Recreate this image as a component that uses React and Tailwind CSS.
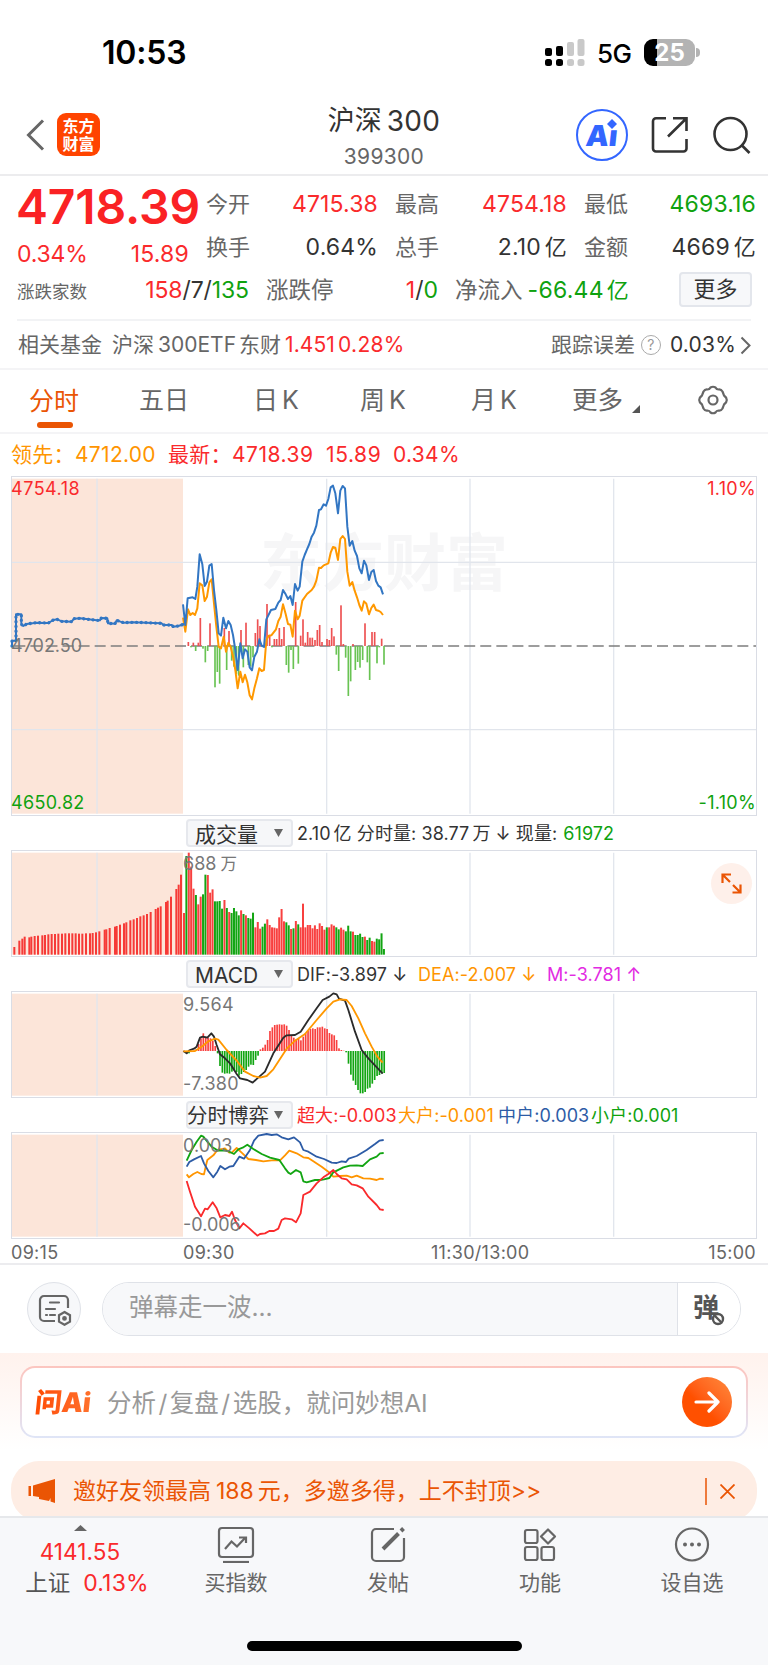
import React from 'react';

const RED = '#f8403f';
const GREEN = '#12a512';

// 主圖座標皆為 3 倍精度
const preMarketLine =
  '36,528 36,512 48,512 48,433 64,433 64,463 70,468 80,462 110,458 145,459 160,450 172,448 185,454 215,455 222,446 240,445 290,451 300,451 304,444 322,445 324,460 345,461 350,451 370,458 400,457 440,458 485,460 490,465 515,465 520,470 535,468 553,462';

const priceLine =
  '549,403 556,465 563,385 578,382 586,387 592,350 599,253 607,283 614,348 621,335 628,287 635,282 642,360 649,420 656,490 663,497 670,443 678,475 685,453 692,465 699,495 706,540 713,600 721,520 728,565 735,538 742,545 749,592 756,601 763,560 771,545 778,508 785,527 792,531 799,448 813,420 826,417 835,398 842,390 849,360 857,373 864,387 871,378 878,405 885,342 893,362 899,350 907,275 914,255 921,238 928,222 935,200 942,188 949,167 957,120 963,118 971,103 978,107 985,87 992,52 999,47 1006,70 1014,130 1021,62 1028,48 1035,55 1042,170 1049,227 1057,213 1064,242 1071,258 1078,295 1085,310 1092,272 1099,286 1107,330 1114,306 1121,300 1128,333 1135,347 1142,352 1149,373';

const leadLine =
  '549,443 556,485 564,418 571,435 578,429 585,435 592,415 599,340 607,346 614,393 621,380 628,337 635,328 642,400 649,470 656,530 663,535 671,500 678,545 685,518 692,530 699,560 706,600 713,655 721,605 728,637 735,614 742,637 749,676 756,688 763,655 771,625 778,595 785,603 792,600 799,510 806,497 814,496 828,478 835,453 842,440 849,403 857,432 864,462 871,464 878,500 885,422 893,448 899,437 907,392 921,372 935,360 942,350 949,332 957,293 963,294 971,286 985,280 992,248 999,231 1006,233 1014,270 1021,207 1028,198 1035,207 1042,305 1049,347 1057,336 1064,362 1071,382 1078,405 1085,422 1092,394 1099,401 1107,433 1114,414 1121,404 1128,420 1135,422 1142,426 1149,435';

const momentum = [
  [565, 516], [573, 532], [580, 518], [587, 543], [595, 518], [601, 444], [609, 536], [616, 577], [623, 543],
  [630, 460], [645, 652], [652, 606], [659, 641], [673, 474], [680, 600], [687, 483], [695, 572], [702, 590],
  [709, 612], [716, 617], [723, 480], [730, 592], [738, 458], [745, 585], [752, 590], [759, 562], [766, 489],
  [773, 448], [780, 468], [801, 402], [809, 495], [816, 532], [823, 507], [830, 507], [838, 474], [845, 507],
  [852, 471], [859, 585], [866, 608], [873, 540], [880, 597], [887, 396], [895, 581], [902, 497], [909, 448],
  [916, 518], [923, 486], [930, 503], [937, 503], [945, 510], [952, 480], [959, 465], [966, 516], [981, 507],
  [988, 510], [995, 474], [1002, 499], [1009, 554], [1016, 603], [1023, 406], [1030, 522], [1037, 563],
  [1045, 678], [1052, 634], [1059, 522], [1066, 600], [1073, 576], [1080, 593], [1088, 570], [1095, 460],
  [1102, 577], [1109, 630], [1116, 486], [1124, 486], [1131, 580], [1138, 532], [1145, 506], [1152, 584],
];

const preVolume = [
  [43, 411], [58, 392], [67, 386], [74, 380], [88, 382], [94, 380], [104, 378], [114, 377], [127, 376], [135, 375],
  [145, 373], [155, 372], [165, 372], [175, 371], [186, 371], [196, 370], [207, 370], [217, 370], [227, 370],
  [237, 371], [247, 371], [258, 370], [270, 370], [278, 369], [288, 367], [298, 364], [314, 359], [319, 358],
  [329, 354], [345, 350], [350, 348], [360, 344], [372, 340], [379, 337], [391, 331], [401, 328], [411, 324],
  [421, 319], [431, 316], [441, 312], [452, 306], [467, 297], [474, 293], [482, 289], [498, 276], [503, 272],
  [513, 260], [529, 237], [536, 224], [543, 194],
];

// 開盤後成交量，r 漲 g 跌
const volume =
  'r219 g48 r38 r80 r146 g165 r193 r170 g163 g104 r105 r158 r148 g184 g184 g183 g206 r180 g204 r216 g219 g204 g214 g226 r211 g222 r226 g234 g236 g218 r262 r246 r266 g260 g251 r238 r255 r262 r263 r265 r232 r207 r244 g247 g256 r267 g265 r243 g253 r262 r191 r262 r255 r255 r265 r256 r267 r250 r258 r269 g262 r262 r253 r257 g262 g268 r263 r269 g274 g257 g274 r275 g285 g285 g281 g291 r290 g300 g293 r303 r305 g296 g298 g280 g327'.split(' ');

const macdBars = [
  245, 250, 244, 242, 238, 222, 205, 190, 200, 203, 205, 212, 228, 250, 288, 308, 311, 310, 311, 305, 302, 306, 317,
  312, 306, 300, 290, 284, 285, 270, 257, 238, 233, 224, 210, 183, 172, 165, 164, 163, 164, 163, 167, 180, 195, 203,
  208, 207, 211, 200, 190, 182, 177, 175, 177, 172, 172, 170, 175, 177, 189, 193, 196, 210, 235, 240, 242, 247, 281,
  314, 332, 345, 360, 370, 370, 366, 356, 353, 341, 330, 318, 315, 310, 309,
];

const difLine =
  '40,243 50,250 58,241 72,236 80,230 90,203 98,200 112,203 124,190 132,200 140,225 150,253 165,265 180,280 200,312 210,325 232,330 248,338 262,325 285,305 310,250 340,203 350,196 375,195 392,185 415,150 440,115 458,90 478,80 490,70 500,73 507,86 525,92 535,120 555,185 575,240 595,265 612,283 638,311';
const deaLine =
  '40,244 75,243 95,230 115,214 135,206 145,209 170,240 200,272 225,305 250,318 270,323 290,318 310,298 350,236 375,212 405,192 440,150 470,115 490,95 510,88 530,90 545,108 565,145 585,190 605,230 622,260 638,278';

const flows = [
  {
    color: '#ff9500',
    points:
      '50,613 57,622 70,612 82,606 94,612 102,613 107,590 112,570 130,556 140,543 150,538 165,535 178,548 186,547 200,534 215,548 235,567 258,570 280,574 305,571 330,571 345,556 358,542 380,550 400,562 415,564 430,574 455,590 475,605 490,620 510,618 530,617 545,622 560,617 580,625 600,626 620,630 630,626 641,627',
  },
  {
    color: '#2d5ca6',
    points:
      '50,590 58,576 72,568 93,558 102,580 115,603 130,622 142,605 151,588 165,598 178,590 190,588 208,560 222,566 240,540 252,512 265,497 290,492 305,495 320,493 335,502 355,508 372,502 390,517 400,540 415,545 440,560 462,567 485,578 500,579 515,574 528,576 536,566 560,558 590,540 615,522 628,512 641,510',
  },
  {
    color: GREEN,
    points:
      '50,572 65,540 80,515 93,497 100,500 112,515 125,530 145,542 165,541 180,546 192,552 205,538 218,533 232,524 250,537 275,552 300,563 328,570 345,595 355,608 362,612 378,600 392,607 400,634 410,637 435,630 450,630 462,628 478,624 490,607 520,592 540,587 560,586 578,588 600,568 620,560 630,550 641,549',
  },
  {
    color: '#fa2a2c',
    points:
      '50,633 60,665 75,710 93,739 105,716 113,718 128,697 140,715 151,742 165,735 178,738 186,725 195,750 208,775 220,760 238,775 262,797 270,792 285,790 298,783 312,783 325,776 335,750 345,745 365,748 378,757 392,730 400,675 420,665 440,640 460,622 475,612 490,600 500,612 515,625 530,628 545,643 560,646 578,655 595,680 620,705 630,718 641,720',
  },
];

// 時間軸直線與盤前底色，origin 為該圖上邊界
const Frame = ({ top, bottom }) => (
  <g>
    <rect x="34" y={top + 8} width="515" height={bottom - top - 15} fill="#fce5d9" />
    <g stroke="#e2e6ed" strokeWidth="4">
      <path d={`M291 ${top + 8}V${bottom - 7}M980 ${top + 8}V${bottom - 7}M1410 ${top + 8}V${bottom - 7}M1841 ${top + 8}V${bottom - 7}`} />
    </g>
    <g stroke="#dadde5" strokeWidth="3" fill="none">
      <path d={`M33 ${top + 1.5}H2271M33 ${bottom - 1.5}H2271M34.5 ${top}V${bottom}M2269.5 ${top}V${bottom}`} />
    </g>
  </g>
);

const Line = ({ points, color, width = 5.5 }) => (
  <polyline points={points} fill="none" stroke={color} strokeWidth={width} strokeLinejoin="round" />
);

const Bar = ({ x, y, base, color, width = 5 }) => (
  <rect x={x - width / 2} y={Math.min(y, base)} width={width} height={Math.abs(y - base)} fill={color} />
);

const StatusBar = () => (
  <div className="flex h-24 items-start justify-between pl-[102px] pr-[68px]">
    <span className="mt-[37px] text-[32px] leading-8 font-semibold tracking-[-0.2px] text-black">10:53</span>
    <div className="mt-[38px] flex items-center">
      <svg className="h-[27px] w-10" viewBox="0 0 40 27">
        <g fill="#000">
          <rect x="0" y="9" width="7" height="8" rx="2" />
          <rect x="11" y="7" width="7" height="10" rx="2" />
          <rect x="0" y="20" width="7" height="7" rx="2.5" />
          <rect x="11" y="20" width="7" height="7" rx="2.5" />
        </g>
        <g fill="#c9c9c9">
          <rect x="22" y="3" width="7" height="14" rx="2" />
          <rect x="32.5" y="0" width="7" height="17" rx="2" />
          <rect x="22" y="20" width="7" height="7" rx="2.5" />
          <rect x="32.5" y="20" width="7" height="7" rx="2.5" />
        </g>
      </svg>
      <span className="mt-[2px] ml-[12px] w-[36px] text-[26px] leading-[27px] font-medium tracking-[-0.5px] text-black">5G</span>
      <div className="ml-[11px] flex h-[27px] w-[51px] items-center justify-center rounded-[9px] bg-linear-to-r from-black from-25% to-[#b3b3b3] to-25% text-[24px] leading-none font-bold text-white">
        25
      </div>
      <div className="ml-[1px] h-[9px] w-[4px] rounded-r-full bg-[#b3b3b3]"></div>
    </div>
  </div>
);

const Header = () => (
  <div className="flex h-20 items-start justify-between border-b-2 border-[#ececee] pr-[17px] pl-[26px]">
    <div className="mt-[17px] flex w-[213px] items-center">
      <svg className="h-[32px] w-[19px]" viewBox="0 0 19 32" fill="none" stroke="#666" strokeWidth="3">
        <path d="M17 1.5L2.5 16L17 30.5" />
      </svg>
      <div className="ml-[12px] flex h-[43px] w-[43px] flex-col items-center justify-center rounded-[9px] bg-[#ff4400] text-[16px] leading-[18px] font-bold text-white">
        <span>东方</span>
        <span>财富</span>
      </div>
    </div>
    <div className="mt-[9px] flex flex-col items-center">
      <div className="flex items-center gap-[5px] text-[27px] leading-8 text-[#333]">
        <span>沪深</span>
        <span className="text-[28px] tracking-[0.3px]">300</span>
      </div>
      <span className="mt-[8px] text-[21px] leading-6 tracking-[0.3px] text-[#666]">399300</span>
    </div>
    <div className="mt-[13px] flex w-[222px] items-center justify-end">
      <div className="relative flex h-[52px] w-[52px] items-center justify-center rounded-full border-[2.5px] border-[#3366ff] text-[29px] leading-none font-black text-[#3366ff]">
        <span className="-skew-x-6">Aı</span>
        <svg className="absolute top-[8px] left-[29px] h-[10px] w-[10px]" viewBox="0 0 10 10" fill="#3366ff">
          <path d="M5 0L10 5L5 10L0 5Z" />
        </svg>
      </div>
      <svg className="ml-[23px] h-[38px] w-[38px]" viewBox="0 0 38 38" fill="none" stroke="#333" strokeWidth="2.6">
        <path d="M15 2.3H5a3 3 0 0 0-3 3V32.500a3 3 0 0 0 3 3H32.500a3 3 0 0 0 3-3V23" />
        <path d="M22 2.300H35.500V15M35.500 2.300L17 20.500" />
      </svg>
      <svg className="ml-[24px] h-[38px] w-[38px]" viewBox="0 0 38 38" fill="none" stroke="#333" strokeWidth="2.6">
        <circle cx="17.500" cy="18" r="16" />
        <path d="M28.500 29L36.500 37" />
      </svg>
    </div>
  </div>
);

const Stat = ({ label, value, unit, color = 'text-[#333]' }) => (
  <div className="flex items-center justify-between">
    <span className="text-[22px] text-[#666]">{label}</span>
    <span className={`flex items-center gap-[4px] text-[23px] tracking-[0.15px] ${color}`}>
      {value}
      {unit && <span className="text-[22px]">{unit}</span>}
    </span>
  </div>
);

const Quote = () => (
  <div className="h-[146px] pr-[12px] pl-[17px] leading-7">
    <div className="grid h-[94px] grid-cols-4 gap-x-[17px] pt-[14px]">
      <div>
        <div className="-ml-px text-[48px] leading-[34px] font-semibold tracking-[-0.15px] whitespace-nowrap text-[#fa2224]">4718.39</div>
        <div className="mt-[16px] flex justify-between text-[23px] text-[#fa2a2c]">
          <span className="tracking-[-0.2px]">0.34%</span>
          <span className="tracking-[0.2px]">15.89</span>
        </div>
      </div>
      <div className="space-y-[15px]">
        <Stat label="今开" value="4715.38" color="text-[#fa2a2c]" />
        <Stat label="换手" value="0.64%" />
      </div>
      <div className="space-y-[15px]">
        <Stat label="最高" value="4754.18" color="text-[#fa2a2c]" />
        <Stat label="总手" value="2.10" unit="亿" />
      </div>
      <div className="space-y-[15px]">
        <Stat label="最低" value="4693.16" color="text-[#0fa20f]" />
        <Stat label="金额" value="4669" unit="亿" />
      </div>
    </div>
    <div className="flex h-[38px] items-center gap-[17px] text-[23px]">
      <div className="flex w-[232px] items-center justify-between pt-[2px]">
        <span className="mt-[4px] text-[17.5px] text-[#666]">涨跌家数</span>
        <span className="tracking-[-0.1px] text-[#333]">
          <span className="text-[#fa2a2c]">158</span>/7/<span className="text-[#0fa20f]">135</span>
        </span>
      </div>
      <div className="flex w-[172px] items-center justify-between pt-[2px]">
        <span className="text-[22.5px] text-[#666]">涨跌停</span>
        <span className="text-[#333]">
          <span className="text-[#fa2a2c]">1</span>/<span className="text-[#0fa20f]">0</span>
        </span>
      </div>
      <div className="flex w-[174px] items-center justify-between pt-[2px] whitespace-nowrap">
        <span className="text-[22.5px] text-[#666]">净流入</span>
        <span className="flex items-center gap-[3px] tracking-[0.25px] text-[#0fa20f]">
          -66.44<span className="text-[22px]">亿</span>
        </span>
      </div>
      <div className="ml-[33px] flex h-[35px] w-[73px] items-center justify-center rounded-[4px] border-2 border-[#e3e6ec] bg-[#f7f8fa] text-[22px] text-[#333]">更多</div>
    </div>
    <div className="mt-[11px] mr-[5px] h-[2px] bg-[#f2f3f5]"></div>
  </div>
);

const FundRow = () => (
  <div className="flex h-[48px] items-center border-b-2 border-[#f4f4f6] pr-[17px] pl-[18px] text-[21px] text-[#666]">
    <span>相关基金</span>
    <span className="ml-[10px]">沪深</span>
    <span className="ml-[4px]">300ETF</span>
    <span className="ml-[3px]">东财</span>
    <span className="ml-[4px] tracking-[0.1px] text-[#fa2a2c]">1.451</span>
    <span className="ml-[3px] tracking-[0.3px] text-[#fa2a2c]">0.28%</span>
    <span className="ml-auto">跟踪误差</span>
    <span className="mx-[6px] flex h-5 w-5 items-center justify-center rounded-full border-[1.5px] border-[#aaa] text-[14px] leading-none text-[#999]">?</span>
    <span className="ml-[3px] tracking-[0.2px] text-[#333]">0.03%</span>
    <svg className="ml-[4px] h-[19px] w-[11px]" viewBox="0 0 11 19" fill="none" stroke="#666" strokeWidth="2">
      <path d="M1.500 1.500L9.500 9.500L1.500 17.500" />
    </svg>
  </div>
);

const Tabs = () => (
  <div className="flex h-[64px] items-center border-b-2 border-[#f4f4f6] pl-[29px] text-[25px] leading-8 text-[#666]">
    <div className="flex w-[110px] flex-col pt-[11px] text-[#ea5504]">
      <span>分时</span>
      <span className="mt-[5px] ml-[8px] h-[6px] w-[36px] rounded-full bg-[#ea5504]"></span>
    </div>
    <span className="-mt-[2px] w-[114px]">五日</span>
    <span className="-mt-[2px] flex w-[107px] gap-[4px]">日<span>K</span></span>
    <span className="-mt-[2px] flex w-[111px] gap-[4px]">周<span>K</span></span>
    <span className="-mt-[2px] flex w-[101px] gap-[4px]">月<span>K</span></span>
    <span className="-mt-[2px] w-[60px] text-[25.500px]">更多</span>
    <svg className="mt-[16px] h-[8px] w-[8px]" viewBox="0 0 8 8" fill="#555">
      <path d="M8 0V8H0Z" />
    </svg>
    <svg className="-mt-[2px] ml-[57px] h-[30px] w-[32px]" viewBox="0 0 32 30" fill="none" stroke="#666" strokeWidth="2.2" strokeLinejoin="round">
      <path d="M10.500 4.500Q12.500 4.500 13.500 2.500Q16 1 18.500 2.500Q19.500 4.500 21.500 4.500Q24 4 25.500 6.500Q26.500 9 27 10.500Q29.800 12.500 29.800 15Q29.800 17.500 27 19.500Q26.500 21 25.500 23.500Q24 26 21.500 25.500Q19.500 25.500 18.500 27.500Q16 29 13.500 27.500Q12.500 25.500 10.500 25.500Q8 26 6.500 23.500Q5.500 21 5 19.500Q2.200 17.500 2.200 15Q2.200 12.500 5 10.500Q5.500 9 6.500 6.500Q8 4 10.500 4.500Z" />
      <circle cx="16" cy="15" r="4.500" />
    </svg>
  </div>
);

const LeadRow = () => (
  <div className="flex h-[42px] items-center pb-[2px] pl-[11px] text-[21px] leading-none tracking-[0.3px] whitespace-nowrap text-[#fa2a2c]">
    <span className="w-[64px] text-[#ff9500]">领先：</span>
    <span className="w-[93px] text-[#ff9500]">4712.00</span>
    <span className="w-[64px]">最新：</span>
    <span className="w-[94px] tracking-[0.500px]">4718.39</span>
    <span className="w-[67px] tracking-[0.600px]">15.89</span>
    <span>0.34%</span>
  </div>
);

const PriceChart = () => (
  <div className="relative h-[340px] text-[18px] leading-5 tracking-[0.300px]">
    <span className="absolute top-[53px] left-[260px] text-[62px] leading-[70px] font-bold tracking-normal text-[#f6f6f7]">东方财富</span>
    <svg className="relative block h-[340px] w-[768px]" viewBox="0 18 2304 1020">
      <Frame top={18} bottom={1038} />
      <path d="M36 277H2268M36 779H2268" stroke="#e1e5ec" strokeWidth="4" />
      <path d="M36 528H2268" stroke="#7d7d7d" strokeWidth="4" strokeDasharray="33 15.200" strokeDashoffset="-7" />
      {momentum.map(([x, y]) => (
        <Bar key={x} x={x} y={y} base={528} color={y < 528 ? '#ee5152' : '#69c353'} />
      ))}
      <Line points={leadLine} color="#ff9800" width={6} />
      <Line points={preMarketLine} color="#3276c3" width={6} />
      <polyline points={preMarketLine} fill="none" stroke="#3276c3" strokeWidth="10" strokeLinecap="round" strokeDasharray="0.1 14" />
      <Line points={priceLine} color="#3276c3" width={6} />
    </svg>
    <span className="absolute top-[3px] left-[11px] tracking-[0.500px] text-[#fa2a2c]">4754.18</span>
    <span className="absolute top-[3px] right-[12px] text-[#fa2a2c]">1.10%</span>
    <span className="absolute top-[160px] left-[11px] tracking-normal text-[#777]">4702.50</span>
    <span className="absolute top-[317px] left-[11px] text-[#0fa20f]">4650.82</span>
    <span className="absolute top-[317px] right-[12px] text-[#0fa20f]">-1.10%</span>
  </div>
);

const IndicatorRow = ({ name, tight, children }) => (
  <div className="flex h-[34px] items-center pl-[186px] text-[18px] leading-none whitespace-nowrap text-[#333]">
    <div className={`flex h-[28px] w-[107px] shrink-0 items-center justify-between rounded-[4px] border-2 border-[#e6e8ed] bg-[#f6f7f9] pr-[8px] text-[21px] ${tight ? '' : 'pl-[7px]'}`}>
      <span className={tight ? '-ml-px pt-[2px] text-[20.500px]' : 'pt-[2px]'}>{name}</span>
      <svg className="h-[8px] w-[9px]" viewBox="0 0 9 8" fill="#666">
        <path d="M0 0H9L4.500 8Z" />
      </svg>
    </div>
    <div className="flex items-center pt-[2px] pl-[4px] tracking-[0.080px]">{children}</div>
  </div>
);

const VolumeChart = () => (
  <div className="relative h-[107px]">
    <svg className="block h-[107px] w-[768px]" viewBox="0 120 2304 321">
      <Frame top={120} bottom={441} />
      {preVolume.map(([x, y]) => (
        <Bar key={x} x={x} y={y} base={434} color="#f63a37" width={6} />
      ))}
      {volume.map((v, i) => (
        <Bar key={i} x={552 + i * 7.14} y={Number(v.slice(1)) + 90} base={434} color={v[0] === 'r' ? RED : GREEN} width={6} />
      ))}
    </svg>
    <span className="absolute top-[4px] left-[183px] flex items-center gap-[4px] text-[18px] leading-5 text-[#777]">
      688<span className="text-[16.500px]">万</span>
    </span>
    <div className="absolute top-[13px] left-[711px] flex h-[41px] w-[41px] items-center justify-center rounded-full bg-[#fef0ea]">
      <svg className="h-[21px] w-[21px]" viewBox="0 0 21 21" fill="none" stroke="#ea5504" strokeWidth="2.2">
        <path d="M1.500 10V1.500H10M1.500 1.500L9 9M19.500 11.500V19.500H11.500M19.500 19.500L12 12" />
      </svg>
    </div>
  </div>
);

const MacdChart = () => (
  <div className="relative h-[107px] text-[18px] leading-5 tracking-[0.300px] text-[#777]">
    <svg className="block h-[107px] w-[768px]" viewBox="0 543 2304 321">
      <Frame top={543} bottom={864} />
      <g transform="translate(510 480)">
        {macdBars.map((y, i) => (
          <Bar key={i} x={50 + i * 7.14} y={y} base={243} color={y < 243 ? RED : GREEN} />
        ))}
        <Line points={difLine} color="#2b2b2b" />
        <Line points={deaLine} color="#ff9800" />
      </g>
    </svg>
    <span className="absolute top-[4px] left-[183px]">9.564</span>
    <span className="absolute top-[83px] left-[183px]">-7.380</span>
  </div>
);

const FlowChart = () => (
  <div className="relative h-[107px] text-[18px] leading-5 text-[#777]">
    <svg className="block h-[107px] w-[768px]" viewBox="0 966 2304 321">
      <Frame top={966} bottom={1287} />
      <g transform="translate(510 480)">
        {flows.map((f) => (
          <Line key={f.color} points={f.points} color={f.color} />
        ))}
      </g>
    </svg>
    <span className="absolute top-[4px] left-[183px]">0.003</span>
    <span className="absolute top-[83px] left-[183px]">-0.006</span>
  </div>
);

const TimeAxis = () => (
  <div className="flex h-[26px] items-center border-b-2 border-[#ececef] pt-[4px] pr-[12px] pl-[11px] text-[18px] leading-none tracking-[0.300px] text-[#666]">
    <span className="w-[172px]">09:15</span>
    <span className="w-[248px]">09:30</span>
    <span>11:30/13:00</span>
    <span className="ml-auto">15:00</span>
  </div>
);

const Danmu = () => (
  <div className="flex h-[88px] items-center pl-[27px]">
    <div className="flex h-[54px] w-[54px] items-center justify-center rounded-full border border-[#dfe2e8] bg-[#f7f8fa]">
      <svg className="mt-px ml-px h-[32px] w-[34px]" viewBox="0 0 34 32" fill="none" stroke="#666" strokeWidth="2.2">
        <path d="M17 27H6a4 4 0 0 1-4-4V6a4 4 0 0 1 4-4H26a4 4 0 0 1 4 4V14" />
        <path d="M12 8.500H21M8 15H17M12 21H17M8 21h1" strokeLinecap="round" />
        <path d="M26.500 18L32 21.200V27.600L26.500 30.800L21 27.600V21.200Z" />
        <circle cx="26.500" cy="24.400" r="1.300" fill="#666" />
      </svg>
    </div>
    <div className="ml-[21px] flex h-[54px] w-[639px] overflow-hidden rounded-full border border-[#dfe2e8]">
      <div className="flex flex-1 items-center bg-[#f7f8fa] pb-[4px] pl-[26px] text-[24.500px] text-[#999]">弹幕走一波...</div>
      <div className="relative w-[63px] border-l border-[#dfe2e8] bg-white">
        <span className="absolute top-[12px] left-[15px] text-[26px] leading-[26px] font-bold text-[#555]">弹</span>
        <svg className="absolute top-[29px] left-[33px] h-[14px] w-[14px]" viewBox="0 0 14 14" stroke="#555" strokeWidth="2.400" fill="#fff">
          <circle cx="7" cy="7" r="5" />
          <path d="M4 4L10 10" />
        </svg>
      </div>
    </div>
  </div>
);

const AskAi = () => (
  <div className="h-[108px] bg-linear-to-b from-[#fff2ed] to-white to-90% px-[20px] pt-[13px]">
    <div className="h-[72px] rounded-[15px] bg-linear-to-b from-[#fcc5bf] to-[#dfe5f7] p-[2px]">
      <div className="flex h-full items-center rounded-[13px] bg-white pr-[14px] pl-[13px]">
        <span className="flex w-[72px] -skew-x-6 items-center bg-linear-to-r from-[#ff4a00] to-[#ff7a33] bg-clip-text text-[27px] leading-none font-black tracking-[-0.200px] whitespace-nowrap text-transparent">
          问Ai
        </span>
        <span className="flex flex-1 gap-[2.500px] pt-[2px] text-[24.500px] whitespace-nowrap text-[#999]">
          <span>分析</span>
          <span>/</span>
          <span>复盘</span>
          <span>/</span>
          <span>选股，就问妙想AI</span>
        </span>
        <div className="flex h-[50px] w-[50px] items-center justify-center rounded-full bg-linear-to-bl from-[#ff8a3c] to-[#ff5000] to-60%">
          <svg className="h-[24px] w-[26px]" viewBox="0 0 26 24" fill="none" stroke="#fff" strokeWidth="3.200" strokeLinecap="round" strokeLinejoin="round">
            <path d="M2 12H24M15 3L24 12L15 21" />
          </svg>
        </div>
      </div>
    </div>
  </div>
);

const Promo = () => (
  <div className="h-[55px] overflow-hidden px-[11px]">
    <div className="flex h-[60px] items-center rounded-[28px] bg-[#feede4] pl-[17px] text-[23px] whitespace-nowrap text-[#ea5504]">
      <svg className="h-[24px] w-[28px]" viewBox="0 0 28 24" fill="#ea5504">
        <path d="M0.500 7H3V17H0.500ZM5 6.500L27 0V24L22.500 22.500V19L21 22L11 20V18L5 17Z" />
      </svg>
      <span className="ml-[17px]">邀好友领最高</span>
      <span className="ml-[5px]">188</span>
      <span className="ml-[4px]">元，多邀多得，上不封顶&gt;&gt;</span>
      <span className="ml-auto h-[27px] w-[2px] bg-[#ee7a3c]"></span>
      <svg className="mr-[22px] ml-[13px] h-[15px] w-[15px]" viewBox="0 0 15 15" fill="none" stroke="#ea5504" strokeWidth="1.800">
        <path d="M0.500 0.500L14.500 14.500M14.500 0.500L0.500 14.500" />
      </svg>
    </div>
  </div>
);

const NavItem = ({ label, children }) => (
  <div className="flex w-[152px] flex-col items-center">
    <svg className="h-[38px] w-[38px]" viewBox="0 0 38 38" fill="none" stroke="#666" strokeWidth="2.200">
      {children}
    </svg>
    <span className="mt-[6px] text-[21px] leading-7 text-[#666]">{label}</span>
  </div>
);

const BottomBar = () => (
  <div className="flex h-[149px] flex-col items-center border-t-2 border-[#e6e8eb] bg-[#f7f8fa]">
    <div className="flex w-full flex-1 pt-[7px]">
      <div className="flex w-[160px] flex-col items-center text-[22.500px] leading-7 text-[#fa2a2c]">
        <svg className="h-[6px] w-[13px]" viewBox="0 0 13 6" fill="#666">
          <path d="M0 6L6.500 0L13 6Z" />
        </svg>
        <span className="mt-[7px] tracking-[0.100px]">4141.55</span>
        <span className="mt-[3px] flex gap-[13px] pl-[14px]">
          <span className="text-[#555]">上证</span>
          <span className="text-[23px] tracking-[0.200px]">0.13%</span>
        </span>
      </div>
      <NavItem label="买指数">
        <rect x="2" y="3" width="34" height="29" rx="3" />
        <path d="M6 37H32" />
        <path d="M8 24L14.500 16.500L20 21.500L28.500 12.500M22 12.500H29V18" />
      </NavItem>
      <NavItem label="发帖">
        <path d="M25 4H7a4 4 0 0 0-4 4V32a4 4 0 0 0 4 4H31a4 4 0 0 0 4-4V13" />
        <path d="M14 24L29.500 8.500M32 6L34.500 3.500" strokeWidth="4" />
      </NavItem>
      <NavItem label="功能">
        <rect x="4" y="5" width="12.500" height="13" rx="2" />
        <rect x="4" y="22" width="12.500" height="13" rx="2" />
        <rect x="20.500" y="22" width="12.500" height="13" rx="2" />
        <path d="M27 4.500L34 11.500L27 18.500L20 11.500Z" strokeLinejoin="round" />
      </NavItem>
      <NavItem label="设自选">
        <circle cx="19" cy="19.500" r="16" />
        <g fill="#666" stroke="none">
          <circle cx="12" cy="19.500" r="2" />
          <circle cx="19" cy="19.500" r="2" />
          <circle cx="26" cy="19.500" r="2" />
        </g>
      </NavItem>
    </div>
    <div className="mb-[14px] h-[10px] w-[275px] rounded-full bg-black"></div>
  </div>
);

const App = () => {
  return (
    <div className="h-[1665px] w-[768px] overflow-hidden bg-white font-['Inter','Noto_Sans_CJK_SC',sans-serif]">
      <StatusBar />
      <Header />
      <Quote />
      <FundRow />
      <Tabs />
      <LeadRow />
      <PriceChart />
      <IndicatorRow name="成交量">
        <span>2.10</span>
        <span className="ml-[3px]">亿 分时量: 38.77</span>
        <span className="ml-[3px]">万 ↓ 现量:</span>
        <span className="ml-[6px] text-[#0fa20f]">61972</span>
      </IndicatorRow>
      <VolumeChart />
      <IndicatorRow name="MACD">
        <span className="w-[121px]">DIF:-3.897 ↓</span>
        <span className="w-[129px] text-[#ff9500]">DEA:-2.007 ↓</span>
        <span className="text-[#e22be2]">M:-3.781 ↑</span>
      </IndicatorRow>
      <MacdChart />
      <IndicatorRow name="分时博弈" tight>
        <span className="w-[101px] text-[#fa2a2c]">超大:-0.003</span>
        <span className="w-[100px] text-[#ff9500]">大户:-0.001</span>
        <span className="w-[93px] text-[#2d5ca6]">中户:0.003</span>
        <span className="text-[#0fa20f]">小户:0.001</span>
      </IndicatorRow>
      <FlowChart />
      <TimeAxis />
      <Danmu />
      <AskAi />
      <Promo />
      <BottomBar />
    </div>
  );
};

export default App;
